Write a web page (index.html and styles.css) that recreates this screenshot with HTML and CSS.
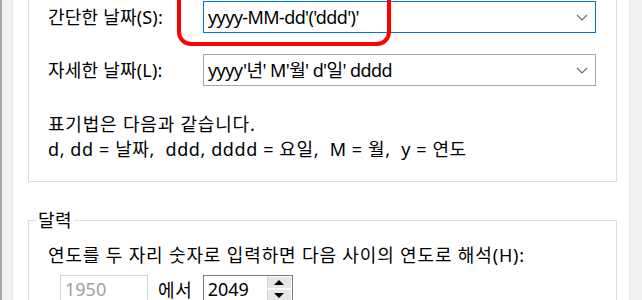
FILE: index.html
```html
<!DOCTYPE html>
<html lang="ko">
<head>
    <meta charset="UTF-8">
    <meta name="viewport" content="width=device-width, initial-scale=1.0">
    <title>날짜 형식</title>
    <link rel="stylesheet" href="styles.css">
</head>
<body>
    <div class="window">
        <div class="edge edge-left"></div>

        <main class="panel">
            <section class="group group-format">
                <div class="field">
                    <label>간단한 날짜(S):</label>
                    <div class="combo combo-focus">
                        <span class="combo-text">yyyy-MM-dd'('ddd')'</span>
                        <svg class="chevron" width="12" height="7" viewBox="0 0 12 7"><polyline points="1,1 6,6 11,1" /></svg>
                    </div>
                </div>
                <div class="field">
                    <label>자세한 날짜(L):</label>
                    <div class="combo">
                        <span class="combo-text">yyyy'년' M'월' d'일' dddd</span>
                        <svg class="chevron" width="12" height="7" viewBox="0 0 12 7"><polyline points="1,1 6,6 11,1" /></svg>
                    </div>
                </div>
                <p class="notes">표기법은 다음과 같습니다.<br><span class="legend-line">d, dd = 날짜,  ddd, dddd = 요일,  M = 월,  y = 연도</span></p>
            </section>

            <fieldset class="group group-calendar">
                <legend>달력</legend>
                <p class="calendar-text">연도를 두 자리 숫자로 입력하면 다음 사이의 연도로 해석(H):</p>
                <div class="range">
                    <div class="numbox disabled">1950</div>
                    <span class="range-word">에서</span>
                    <div class="numbox spin">
                        <span>2049</span>
                        <div class="spin-btns">
                            <div class="spin-btn"><span class="arrow-up"></span></div>
                            <div class="spin-btn"><span class="arrow-down"></span></div>
                        </div>
                    </div>
                </div>
            </fieldset>
        </main>

        <div class="edge edge-right"></div>

        <!-- red marker drawn over the short date box -->
        <div class="highlight"></div>
    </div>
</body>
</html>
```

FILE: styles.css
```css
* {
    box-sizing: border-box;
}
body {
    margin: 0;
    background: #fff;
    font-family: "Noto Sans", "Noto Sans CJK KR", sans-serif;
    font-size: 18px;
    color: #000;
}
.window {
    position: relative;
    display: flex;
    width: 642px;
    height: 300px;
    overflow: hidden;
}
.edge {
    width: 13px;
    flex-shrink: 0;
    background: #f0f0f0;
}
.edge-left {
    border-left: 2px solid #a8a8a8;
    border-right: 1px solid #e4e4e4;
}
.edge-right {
    border-left: 1px solid #e6e6e6;
}
.panel {
    flex: 1;
    padding: 0 12px 0 15px;
}
.group {
    border: 1px solid #dcdcdc;
}
.group-format {
    margin-top: -12px;
    padding: 12px 20px 19px 19px;
}
.field {
    display: grid;
    grid-template-columns: 155px 1fr;
    align-items: center;
    line-height: 24px;
}
.field label {
    letter-spacing: 0.2px;
}
.field + .field {
    margin-top: 21px;
}
.combo {
    display: flex;
    align-items: center;
    justify-content: space-between;
    height: 32px;
    padding: 0 7px 0 4px;
    border: 1px solid #a6a6a6;
    background: #fff;
}
.combo-text {
    letter-spacing: -0.6px;
}
.combo-focus {
    border-color: #0078d7;
}
.chevron polyline {
    fill: none;
    stroke: #6a6a6a;
    stroke-width: 1.1;
}
.notes {
    margin: 26px 0 0;
    line-height: 25px;
    letter-spacing: 0.8px;
}
.legend-line {
    white-space: pre;
    letter-spacing: 0.6px;
}
.group-calendar {
    margin: 27px 0 0;
    padding: 12px 20px 20px 19px;
    min-width: 0;
}
.group-calendar legend {
    margin-left: -12px;
    padding: 0 2px;
    line-height: 22px;
    letter-spacing: 0.5px;
}
.calendar-text {
    margin: 0;
    line-height: 24px;
    letter-spacing: 0.85px;
}
.range {
    display: flex;
    align-items: center;
    margin-top: 8px;
    padding-left: 12px;
}
.numbox {
    height: 28px;
    line-height: 26px;
    border: 1px solid #7a7a7a;
    padding-left: 4px;
}
.disabled {
    width: 88px;
    border-color: #d0d0d0;
    color: #a0a0a0;
}
.range-word {
    margin: 0 10px;
    letter-spacing: 0.8px;
}
.spin {
    display: flex;
    width: 90px;
    justify-content: space-between;
    padding-right: 0;
}
.spin-btns {
    width: 25px;
    display: flex;
    flex-direction: column;
}
.spin-btn {
    flex: 1;
    display: flex;
    align-items: center;
    justify-content: center;
    background: #e6e6e6;
    border: 1px solid #fff;
    border-left-color: #d0d0d0;
}
.arrow-up {
    width: 0;
    height: 0;
    border-left: 5px solid transparent;
    border-right: 5px solid transparent;
    border-bottom: 5px solid #000;
}
.arrow-down {
    width: 0;
    height: 0;
    border-left: 5px solid transparent;
    border-right: 5px solid transparent;
    border-top: 5px solid #000;
}
.highlight {
    position: absolute;
    left: 177px;
    top: -20px;
    width: 214px;
    height: 66px;
    border: 4px solid #f00;
    border-radius: 14px;
    pointer-events: none;
}
```
